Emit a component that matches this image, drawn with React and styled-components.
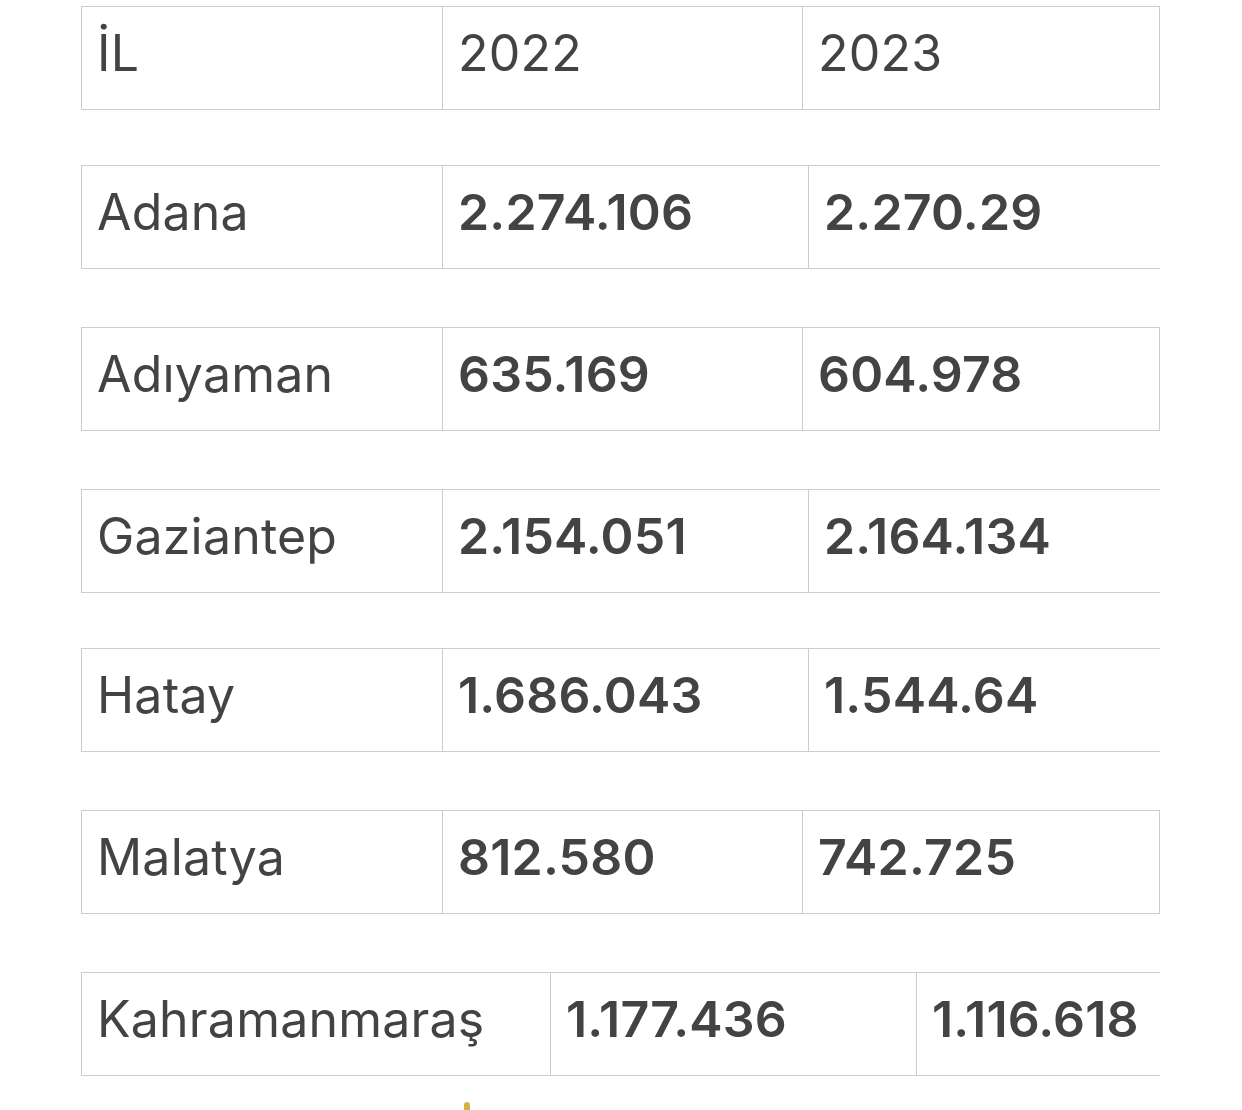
import React from "react";
import styled, { createGlobalStyle } from "styled-components";

const GlobalStyle = createGlobalStyle`
  html, body {
    margin: 0;
    padding: 0;
    background: #ffffff;
  }
  body {
    font-family: Inter, "Liberation Sans", Arial, sans-serif;
    color: #434343;
  }
`;

const Page = styled.div`
  width: 1242px;
  height: 1110px;
  overflow: hidden;
  padding: 6px 0 0 81px;
  box-sizing: border-box;
  display: flex;
  flex-direction: column;
`;

const Stack = styled.div`
  display: flex;
  flex-direction: column;
  flex-shrink: 0;
`;

const Table = styled.div`
  width: 1079px;
  height: 104px;
  box-sizing: border-box;
  display: grid;
  grid-template-columns: ${({ $cols }) => $cols};
  border: 1px solid #cdcdcd;
  border-right: ${({ $open }) => ($open ? "none" : "1px solid #cdcdcd")};
  margin-top: ${({ $top }) => $top}px;
`;

const Cell = styled.div`
  display: flex;
  align-items: center;
  padding: 0 0 10px 15px;
  box-sizing: border-box;
  border-left: ${({ $first }) => ($first ? "none" : "1px solid #cdcdcd")};
  font-size: 50px;
  letter-spacing: 0.2px;
  font-weight: ${({ $bold }) => ($bold ? 600 : 400)};
  color: #434343;
  white-space: nowrap;
`;

const Dot = styled.div`
  flex-shrink: 0;
  width: 6px;
  height: 8px;
  border-radius: 3px 3px 0 0;
  background: #d8b13a;
  margin: 26px 0 0 383px;
`;

const rows = [
  { top: 0, cols: "360px 360px 1fr", cells: ["İL", "2022", "2023"], head: true },
  { top: 55, cols: "360px 366px 1fr", cells: ["Adana", "2.274.106", "2.270.29"], open: true },
  { top: 58, cols: "360px 360px 1fr", cells: ["Adıyaman", "635.169", "604.978"] },
  { top: 58, cols: "360px 366px 1fr", cells: ["Gaziantep", "2.154.051", "2.164.134"], open: true },
  { top: 55, cols: "360px 366px 1fr", cells: ["Hatay", "1.686.043", "1.544.64"], open: true },
  { top: 58, cols: "360px 360px 1fr", cells: ["Malatya", "812.580", "742.725"] },
  { top: 58, cols: "468px 366px 1fr", cells: ["Kahramanmaraş", "1.177.436", "1.116.618"], open: true },
];

export default function App() {
  return (
    <>
      <GlobalStyle />
      <Page>
        <Stack>
          {rows.map((r) => (
            <Table key={r.cells[0]} $cols={r.cols} $open={r.open} $top={r.top}>
              {r.cells.map((c, i) => (
                <Cell key={i} $first={i === 0} $bold={!r.head && i > 0}>
                  {c}
                </Cell>
              ))}
            </Table>
          ))}
        </Stack>
        <Dot />
      </Page>
    </>
  );
}
